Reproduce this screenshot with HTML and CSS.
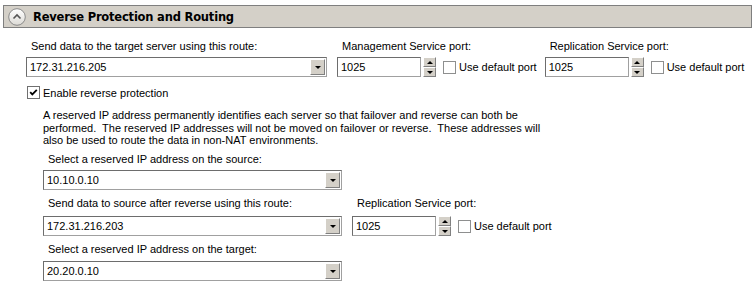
FILE: index.html
```html
<!DOCTYPE html>
<html>
<head>
<meta charset="utf-8">
<link rel="stylesheet" href="styles.css">
</head>
<body>
<div class="header">
  <span class="collapse">
    <svg width="18" height="18" viewBox="0 0 18 18">
      <defs>
        <linearGradient id="g" x1="0" y1="0" x2="0" y2="1">
          <stop offset="0" stop-color="#ffffff"/>
          <stop offset="1" stop-color="#dcdad5"/>
        </linearGradient>
      </defs>
      <circle cx="9" cy="9" r="8.3" fill="url(#g)" stroke="#8a8a8a" stroke-width="1"/>
      <path d="M5.5 10.5 L9 7 L12.5 10.5" fill="none" stroke="#555" stroke-width="1.6"/>
    </svg>
  </span>
  <span class="title">Reverse Protection and Routing</span>
</div>

<div class="content">
  <div class="row first">
    <div class="field">
      <div class="label">Send data to the target server using this route:</div>
      <div class="combo w300"><span class="val">172.31.216.205</span><span class="drop"><i></i></span></div>
    </div>
    <div class="field port1">
      <div class="label">Management Service port:</div>
      <div class="ctl">
        <div class="input">1025</div>
        <div class="spin"><span class="up"><i></i></span><span class="down"><i></i></span></div>
        <span class="cb"></span><span class="cbl">Use default port</span>
      </div>
    </div>
    <div class="field port2">
      <div class="label">Replication Service port:</div>
      <div class="ctl">
        <div class="input">1025</div>
        <div class="spin"><span class="up"><i></i></span><span class="down"><i></i></span></div>
        <span class="cb"></span><span class="cbl">Use default port</span>
      </div>
    </div>
  </div>

  <div class="enable">
    <span class="cb checked"><svg width="11" height="11" viewBox="0 0 11 11"><path d="M2.2 5.2 L4.3 7.4 L8.8 2.8" fill="none" stroke="#000" stroke-width="1.8"/></svg></span>
    <span class="cbl">Enable reverse protection</span>
  </div>

  <div class="sub">
    <p class="desc">A reserved IP address permanently identifies each server so that failover and reverse can both be<br>performed.&nbsp; The reserved IP addresses will not be moved on failover or reverse.&nbsp; These addresses will<br>also be used to route the data in non-NAT environments.</p>

    <div class="field">
      <div class="label">Select a reserved IP address on the source:</div>
      <div class="combo w299"><span class="val">10.10.0.10</span><span class="drop"><i></i></span></div>
    </div>

    <div class="row mid">
      <div class="field">
        <div class="label">Send data to source after reverse using this route:</div>
        <div class="combo w299"><span class="val">172.31.216.203</span><span class="drop"><i></i></span></div>
      </div>
      <div class="field port3">
        <div class="label">Replication Service port:</div>
        <div class="ctl">
          <div class="input">1025</div>
          <div class="spin"><span class="up"><i></i></span><span class="down"><i></i></span></div>
          <span class="cb"></span><span class="cbl">Use default port</span>
        </div>
      </div>
    </div>

    <div class="field last">
      <div class="label">Select a reserved IP address on the target:</div>
      <div class="combo w299"><span class="val">20.20.0.10</span><span class="drop"><i></i></span></div>
    </div>
  </div>
</div>
</body>
</html>
```

FILE: styles.css
```css
html, body {
  margin: 0;
  padding: 0;
  background: #ffffff;
}
body {
  font-family: "Liberation Sans", Arial, sans-serif;
  font-size: 11px;
  color: #000;
  width: 756px;
  height: 297px;
  overflow: hidden;
}
.header {
  margin: 5px 4px 0 3px;
  height: 21px;
  background: #d4d0c8;
  border: 1px solid #7f7f7f;
  display: flex;
  align-items: center;
  padding-left: 4px;
}
.collapse {
  display: flex;
  width: 18px;
  height: 18px;
}
.title {
  margin-left: 7px;
  font-weight: bold;
  font-size: 11.5px;
  font-family: "DejaVu Sans", sans-serif;
  letter-spacing: -0.2px;
}
.content {
  padding-left: 26px;
}
.row {
  display: flex;
}
.row.first {
  margin-top: 12px;
}
.label {
  line-height: 13px;
  padding-left: 5px;
  margin-bottom: 4px;
  white-space: nowrap;
}
.combo {
  display: flex;
  height: 20px;
  box-sizing: border-box;
  border: 1px solid #a0a0a0;
  border-top-color: #6d6d6d;
  border-left-color: #6d6d6d;
  background: #fff;
  align-items: center;
}
.combo .val {
  flex: 1;
  padding-left: 3px;
}
.w300 { width: 301px; }
.w299 { width: 299px; }
.drop {
  width: 15px;
  height: 16px;
  margin-right: 1px;
  box-sizing: border-box;
  background: #d4d0c8;
  border: 1px solid;
  border-color: #fff #808080 #808080 #fff;
  display: flex;
  align-items: center;
  justify-content: center;
}
.drop i, .spin .down i {
  width: 0;
  height: 0;
  border-left: 3px solid transparent;
  border-right: 3px solid transparent;
  border-top: 3px solid #000;
}
.spin .up i {
  width: 0;
  height: 0;
  border-left: 3px solid transparent;
  border-right: 3px solid transparent;
  border-bottom: 3px solid #000;
}
.field.port1 { margin-left: 10px; }
.field.port2 { margin-left: 8px; }
.field.port3 { margin-left: 10px; }
.ctl {
  display: flex;
  align-items: center;
  height: 20px;
}
.input {
  width: 84px;
  height: 20px;
  box-sizing: border-box;
  border: 1px solid #a0a0a0;
  border-top-color: #6d6d6d;
  border-left-color: #6d6d6d;
  padding-left: 3px;
  line-height: 18px;
}
.spin {
  margin-left: 2px;
  display: flex;
  flex-direction: column;
  width: 13px;
  height: 20px;
}
.spin span {
  flex: 1;
  box-sizing: border-box;
  background: #d4d0c8;
  border: 1px solid;
  border-color: #fff #808080 #808080 #fff;
  display: flex;
  align-items: center;
  justify-content: center;
}
.cb {
  display: inline-flex;
  width: 13px;
  height: 13px;
  box-sizing: border-box;
  border: 1px solid #8e8f8f;
  background: #fff;
  margin-left: 7px;
  align-items: center;
  justify-content: center;
}
.cbl {
  margin-left: 3px;
  white-space: nowrap;
}
.enable {
  display: flex;
  align-items: center;
  margin-top: 9px;
  margin-left: 1px;
}
.enable .cb {
  margin-left: 0;
  border: 1px solid #707070;
}
.enable .cbl {
  margin-left: 3px;
}
.sub {
  padding-left: 17px;
}
.desc {
  margin: 10px 0 0 0;
  line-height: 12.7px;
  white-space: nowrap;
}
.sub .field {
  margin-top: 6px;
}
.sub .row .field { margin-top: 0; }
.sub .row.mid { margin-top: 7px; }
.sub .row.mid .label { margin-bottom: 6px; }
.sub .field.last { margin-top: 7px; }
.sub .field.last .label { margin-bottom: 5px; }
```
